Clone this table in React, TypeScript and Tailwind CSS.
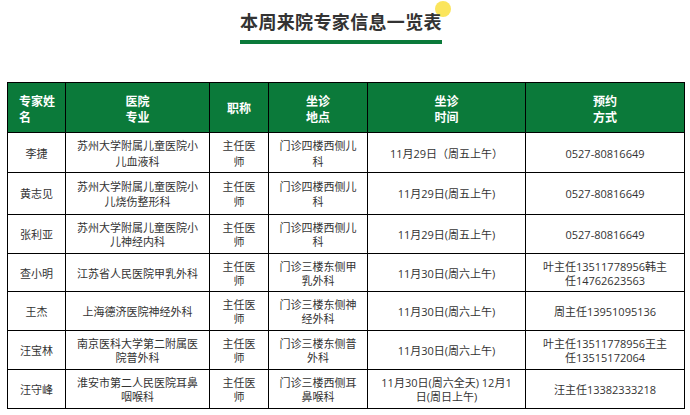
import React from "react";

type Row = {
  h: string;
  lh: string;
  cells: React.ReactNode[];
};

const br = <br />;

const rows: Row[] = [
  {
    h: "h-[40px]",
    lh: "leading-[15.5px]",
    cells: [
      "李捷",
      <>苏州大学附属儿童医院小{br}儿血液科</>,
      <>主任医{br}师</>,
      <>门诊四楼西侧儿{br}科</>,
      "11月29日（周五上午）",
      "0527-80816649",
    ],
  },
  {
    h: "h-[42px]",
    lh: "leading-[14.5px]",
    cells: [
      "黄志见",
      <>苏州大学附属儿童医院小{br}儿烧伤整形科</>,
      <>主任医{br}师</>,
      <>门诊四楼西侧儿{br}科</>,
      "11月29日(周五上午)",
      "0527-80816649",
    ],
  },
  {
    h: "h-[39px]",
    lh: "leading-[14px]",
    cells: [
      "张利亚",
      <>苏州大学附属儿童医院小{br}儿神经内科</>,
      <>主任医{br}师</>,
      <>门诊四楼西侧儿{br}科</>,
      "11月29日(周五上午)",
      "0527-80816649",
    ],
  },
  {
    h: "h-[38px]",
    lh: "leading-[14px]",
    cells: [
      "查小明",
      "江苏省人民医院甲乳外科",
      <>主任医{br}师</>,
      <>门诊三楼东侧甲{br}乳外科</>,
      "11月30日(周六上午)",
      <>叶主任13511778956韩主{br}任14762623563</>,
    ],
  },
  {
    h: "h-[39px]",
    lh: "leading-[14px]",
    cells: [
      "王杰",
      "上海德济医院神经外科",
      <>主任医{br}师</>,
      <>门诊三楼东侧神{br}经外科</>,
      "11月30日(周六上午)",
      "周主任13951095136",
    ],
  },
  {
    h: "h-[39px]",
    lh: "leading-[14px]",
    cells: [
      "汪宝林",
      <>南京医科大学第二附属医{br}院普外科</>,
      <>主任医{br}师</>,
      <>门诊三楼东侧普{br}外科</>,
      "11月30日(周六上午)",
      <>叶主任13511778956王主{br}任13515172064</>,
    ],
  },
  {
    h: "h-[39px]",
    lh: "leading-[14px]",
    cells: [
      "汪守峰",
      <>淮安市第二人民医院耳鼻{br}咽喉科</>,
      <>主任医{br}师</>,
      <>门诊三楼西侧耳{br}鼻喉科</>,
      <>11月30日(周六全天) 12月1{br}日(周日上午)</>,
      "汪主任13382333218",
    ],
  },
];

const widths = ["w-[58px]", "w-[144px]", "w-[59px]", "w-[99px]", "w-[158px]", "w-[159px]"];

export default function App() {
  return (
    <div className="w-[690px] h-[415px] bg-white overflow-hidden" style={{ fontFamily: '"Open Sans", "Noto Sans CJK SC", sans-serif' }}>
      <div className="flex justify-center pt-[9px]">
        <div className="relative mr-[8px]">
          <div className="absolute right-[-9px] top-[-8px] w-[16px] h-[16px] rounded-full bg-[#fbe55c]" />
          <div
            className="relative text-[18px] leading-[24px] font-bold text-[#333333] tracking-[0.35px]"
            style={{ fontFamily: '"Noto Sans CJK SC", sans-serif' }}
          >
            本周来院专家信息一览表
          </div>
          <div className="mt-[7px] h-[4px] bg-[#0b7a3a]" />
        </div>
      </div>
      <table className="mt-[38px] ml-[7px] w-[677px] border-collapse table-fixed">
        <colgroup>
          {widths.map((w, i) => (
            <col key={i} className={w} />
          ))}
        </colgroup>
        <thead>
          <tr className="h-[50px] bg-[#0b7a3a] text-white font-bold text-[12px] leading-[16px]" style={{ fontFamily: '"Noto Sans CJK SC", sans-serif' }}>
            <th className="border border-black text-left pl-[11px] pt-[3px] font-bold align-middle">专家姓<br />名</th>
            <th className="border border-black text-center pt-[3px] font-bold align-middle">医院<br />专业</th>
            <th className="border border-black text-center pt-[1px] font-bold align-middle">职称</th>
            <th className="border border-black text-center pt-[3px] font-bold align-middle">坐诊<br />地点</th>
            <th className="border border-black text-center pt-[3px] font-bold align-middle">坐诊<br />时间</th>
            <th className="border border-black text-center pt-[3px] font-bold align-middle">预约<br />方式</th>
          </tr>
        </thead>
        <tbody>
          {rows.map((r, i) => (
            <tr key={i} className={`${r.h} ${r.lh} text-[11px] text-[#333333]`}>
              {r.cells.map((c, j) => (
                <td key={j} className="border border-black text-center align-middle px-[4px] pt-[2px] p-0 whitespace-nowrap">
                  {c}
                </td>
              ))}
            </tr>
          ))}
        </tbody>
      </table>
    </div>
  );
}
